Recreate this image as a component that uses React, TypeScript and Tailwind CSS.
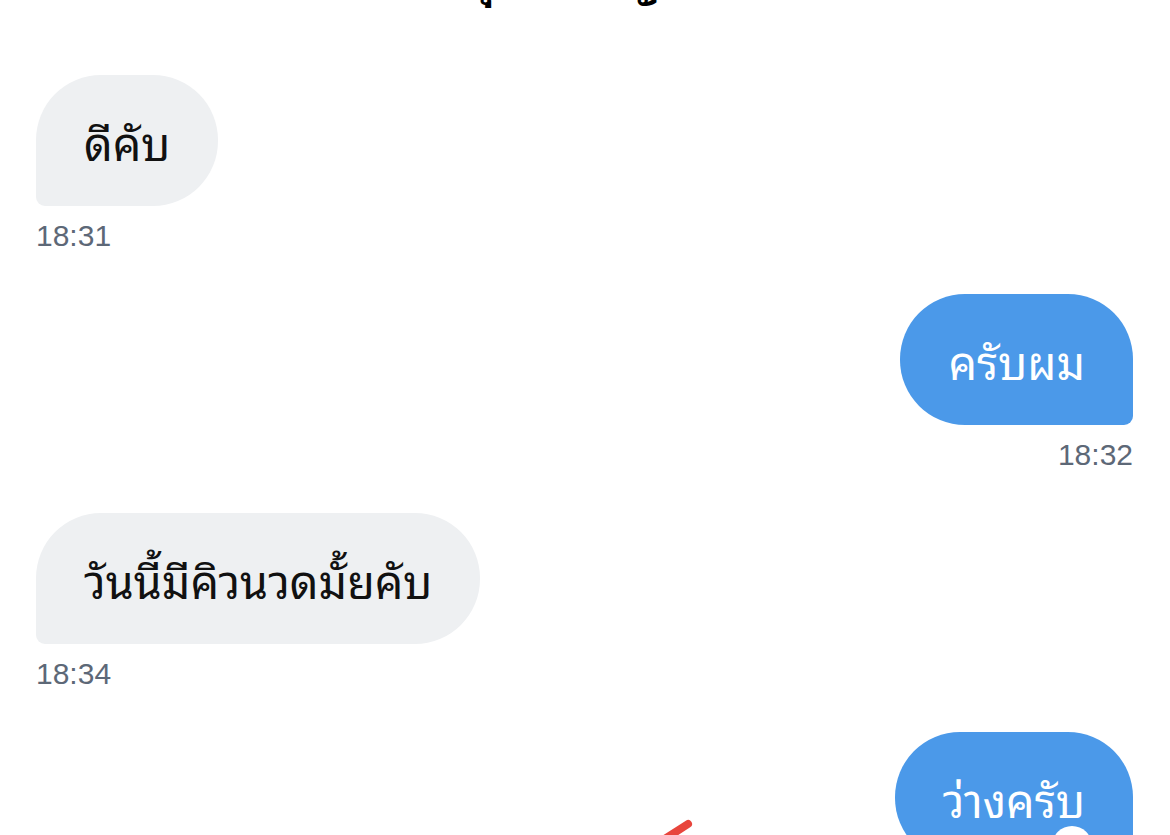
import React from "react";

type Msg = { text: string; time: string; out: boolean };

const msgs: Msg[] = [
  { text: "ดีคับ", time: "18:31", out: false },
  { text: "ครับผม", time: "18:32", out: true },
  { text: "วันนี้มีคิวนวดมั้ยคับ", time: "18:34", out: false },
  { text: "ว่างครับ", time: "18:35", out: true },
];

const thai = {
  fontFamily:
    '"Noto Sans Thai Looped", "Loma", "Garuda", "Noto Sans Thai", "Noto Sans", "Liberation Sans", sans-serif',
};

export default function App() {
  return (
    <div className="w-[1170px] h-[835px] overflow-hidden bg-white relative" style={thai}>
      <div className="h-[75px] relative overflow-hidden">
        <div className="absolute left-[-20px] right-0 top-[-51px] text-center text-[44px] font-bold text-black leading-[50px]">
          คุณสมหญิง
        </div>
      </div>
      <div className="flex flex-col pl-[36px] pr-[37px]">
        {msgs.map((m, i) => (
          <div key={i} className={`flex flex-col mb-[40px] ${m.out ? "items-end" : "items-start"}`}>
            <div
              className={`h-[131px] flex items-center px-[48px] text-[45px] font-normal ${
                m.out
                  ? "bg-[#4b99e9] text-white rounded-[65px] rounded-br-[9px]"
                  : "bg-[#eef0f2] text-[#111] rounded-[65px] rounded-bl-[9px]"
              }`}
            >
              <span className="relative top-[1px]">{m.text}</span>
            </div>
            <div
              className="mt-[12px] text-[30px] leading-[36px] text-[#5d6877]"
              style={{ fontFamily: '"Liberation Sans", Arial, sans-serif' }}
            >
              {m.time}
            </div>
          </div>
        ))}
      </div>
      <svg className="absolute left-[640px] top-[812px]" width="60" height="30" viewBox="0 0 60 30">
        <path d="M48 12 L20 30" stroke="#e8453c" strokeWidth="8" strokeLinecap="round" />
      </svg>
      <div className="absolute left-[1052px] top-[826px] w-[40px] h-[40px] rounded-full bg-white" />
    </div>
  );
}
